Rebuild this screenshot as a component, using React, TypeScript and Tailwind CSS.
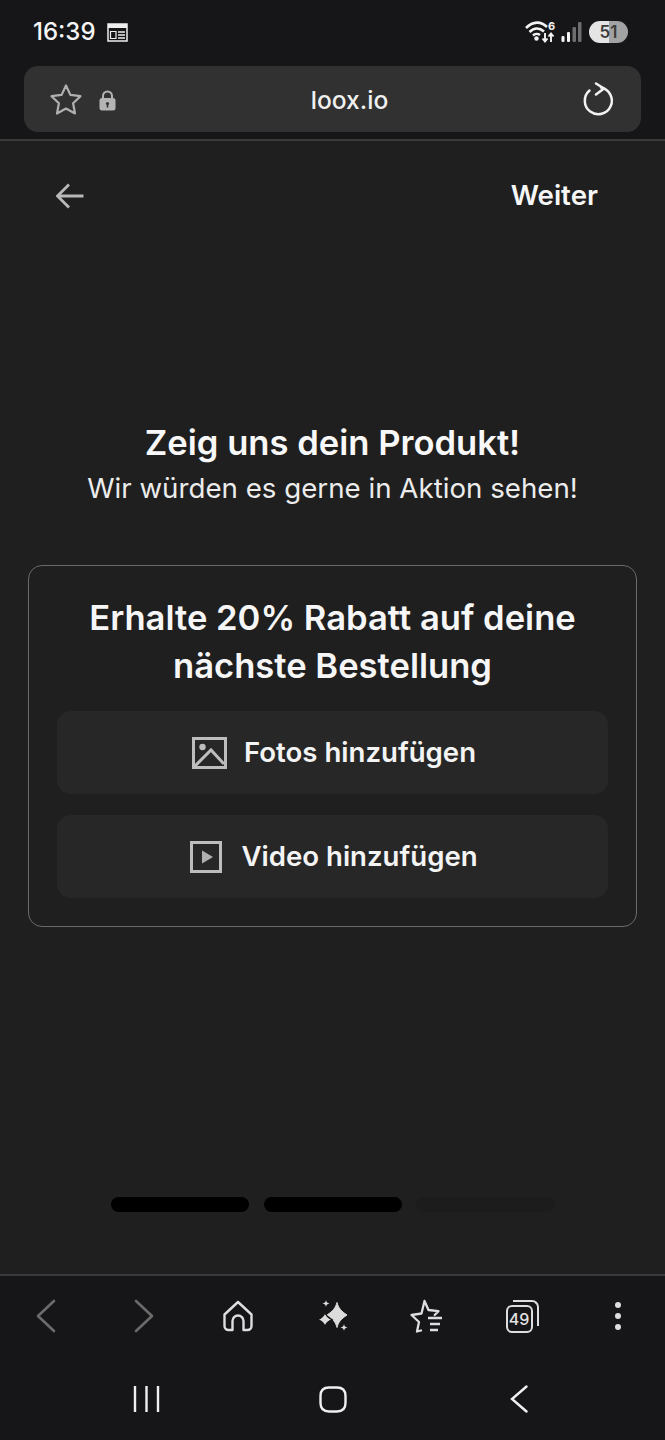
import React from "react";

const font = { fontFamily: "Inter, 'Liberation Sans', sans-serif" };

function StatusBar() {
  return (
    <div className="flex h-[66px] items-center justify-between pl-[33px] pr-[37px] pb-[2px]">
      <div className="flex items-center gap-[11px]">
        <span className="text-[24px] font-medium leading-none text-[#f5f5f5]">16:39</span>
        <svg width="21" height="19" viewBox="0 0 21 19" fill="none">
          <path d="M1 1h19v17H1z" stroke="#eee" strokeWidth="1.500" />
          <path d="M1 1h19v4H1z" fill="#eee" />
          <path d="M3.500 8.500h5.500v7H3.500z" stroke="#eee" strokeWidth="1.200" />
          <path d="M11 9h7M11 12h7M11 15h7" stroke="#eee" strokeWidth="1.300" />
        </svg>
      </div>
      <div className="flex items-center gap-[5px]">
        <svg width="31" height="24" viewBox="0 0 31 24" fill="none">
          <path d="M1 8C8 1 16 1 22 7" stroke="#f2f2f2" strokeWidth="2.600" />
          <path d="M4.500 12C9 7.500 14.500 7.500 19 11.500" stroke="#f2f2f2" strokeWidth="2.600" />
          <path d="M8 15.500C10 13.500 13 13.500 15 15" stroke="#f2f2f2" strokeWidth="2.600" />
          <circle cx="11.500" cy="18.500" r="2.200" fill="#f2f2f2" />
          <path d="M20 13v8M17.500 18.500l2.500 3 2.500-3" stroke="#f2f2f2" strokeWidth="1.900" />
          <path d="M26 22v-8M23.500 16.500l2.500-3 2.500 3" stroke="#f2f2f2" strokeWidth="1.900" />
          <text x="23" y="10" fontSize="11" fontWeight="700" fill="#f2f2f2" style={font}>6</text>
        </svg>
        <svg width="21" height="22" viewBox="0 0 21 22" fill="none">
          <rect x="0.500" y="15" width="3" height="6" rx="1" fill="#f2f2f2" />
          <rect x="6" y="11" width="3" height="10" rx="1" fill="#f2f2f2" />
          <rect x="11.500" y="6" width="3.500" height="15" rx="1" fill="#6e6e6e" />
          <rect x="17" y="1" width="3.500" height="20" rx="1" fill="#6e6e6e" />
        </svg>
        <div className="relative ml-[2px] flex h-[22px] w-[39px] items-center justify-center overflow-hidden rounded-full bg-[linear-gradient(90deg,#e4e4e4_51%,#a3a3a3_51%)]">
          <span className="text-[17px] font-semibold leading-none text-[#3c3c3c]">51</span>
        </div>
      </div>
    </div>
  );
}

function UrlBar() {
  return (
    <div className="mx-[24px] flex h-[66px] items-center justify-between rounded-[14px] bg-[#313131] pl-[25px] pr-[26px] pt-[2px]">
      <div className="flex items-center gap-[16px]">
        <svg width="34" height="34" viewBox="0 0 34 34" fill="none">
          <path d="M17 2.500l4.400 9.400 10.100 1.300-7.400 7.100 1.900 10.200-9-5-9 5 1.900-10.200-7.400-7.100 10.100-1.300z" stroke="#b0b0b0" strokeWidth="2.200" strokeLinejoin="round" />
        </svg>
        <svg width="17" height="21" viewBox="0 0 17 21" fill="none">
          <path d="M4 9V6a4.500 4.500 0 0 1 9 0v3" stroke="#b4b4b4" strokeWidth="2" />
          <rect x="0.500" y="8" width="16" height="12.500" rx="2.500" fill="#b4b4b4" />
          <circle cx="8.500" cy="13.500" r="1.600" fill="#333" />
          <rect x="7.700" y="14" width="1.600" height="3.500" fill="#333" />
        </svg>
      </div>
      <span className="text-[24.600px] font-medium leading-none text-[#f0f0f0]">loox.io</span>
      <svg width="32" height="36" viewBox="0 0 32 36" fill="none">
        <path d="M18 5.500A13.500 13.500 0 1 1 6.500 8.500" stroke="#f2f2f2" strokeWidth="2.500" strokeLinecap="round" />
        <path d="M13 1.500L21 6.500 13 12.500" stroke="#f2f2f2" strokeWidth="2.500" strokeLinecap="round" strokeLinejoin="round" />
      </svg>
    </div>
  );
}

function PageHeader() {
  return (
    <div className="mt-[41px] flex h-[28px] items-center justify-between pl-[56px] pr-[67px]">
      <svg width="28" height="28" viewBox="0 0 28 28" fill="none">
        <path d="M1.500 14h26M13 2.500L1.500 14 13 25.500" stroke="#b8b8b8" strokeWidth="2.800" />
      </svg>
      <span className="text-[27.700px] font-semibold leading-none text-[#f6f6f6]">Weiter</span>
    </div>
  );
}

function ActionButton({ icon, label, pad }: { icon: React.ReactNode; label: string; pad: string }) {
  return (
    <div className={`flex h-[83px] items-center justify-center gap-[17px] rounded-[14px] bg-[#272727] ${pad}`}>
      {icon}
      <span className="text-[27.600px] font-semibold leading-none text-[#f4f4f4]">{label}</span>
    </div>
  );
}

function Card() {
  return (
    <div className="mx-[28px] mt-[60px] rounded-[14px] border border-[#6a6a6a] px-[28px] pb-[28px] pt-[27px]">
      <h2 className="text-center text-[34.600px] font-semibold leading-[48px] text-[#f6f6f6]">
        Erhalte 20% Rabatt auf deine
        <br />
        nächste Bestellung
      </h2>
      <div className="mt-[22px] flex flex-col gap-[21px]">
        <ActionButton
          pad="pl-[3px]"
          label="Fotos hinzufügen"
          icon={
            <svg width="35" height="32" viewBox="0 0 35 32" fill="none">
              <rect x="1.500" y="1.500" width="32" height="29" stroke="#bdbdbd" strokeWidth="3" />
              <circle cx="10.500" cy="10" r="3.200" fill="#bdbdbd" />
              <path d="M3 29L19 13 32 27" stroke="#bdbdbd" strokeWidth="3" />
            </svg>
          }
        />
        <ActionButton
          pad="pl-[3px] gap-[19px]"
          label="Video hinzufügen"
          icon={
            <svg width="32" height="32" viewBox="0 0 32 32" fill="none">
              <rect x="1.500" y="1.500" width="29" height="29" stroke="#bdbdbd" strokeWidth="3" />
              <path d="M12 9.500L23 16l-11 6.500z" fill="#b0b0b0" />
            </svg>
          }
        />
      </div>
    </div>
  );
}

function Progress() {
  return (
    <div className="mt-[270px] flex justify-center gap-[14.500px]">
      <div className="h-[15px] w-[138px] rounded-full bg-black" />
      <div className="h-[15px] w-[138px] rounded-full bg-black" />
      <div className="h-[15px] w-[138px] rounded-full bg-[#1c1c1c]" />
    </div>
  );
}

function BrowserNav() {
  return (
    <div className="grid h-[84px] grid-cols-7 items-center justify-items-center pb-[4px]">
      <svg className="ml-[-4px]" width="20" height="34" viewBox="0 0 20 34" fill="none">
        <path d="M18 2L2 17l16 15" stroke="#6b6b6b" strokeWidth="2.600" strokeLinecap="round" strokeLinejoin="round" />
      </svg>
      <svg className="ml-[3px]" width="20" height="34" viewBox="0 0 20 34" fill="none">
        <path d="M2 2l16 15L2 32" stroke="#6b6b6b" strokeWidth="2.600" strokeLinecap="round" strokeLinejoin="round" />
      </svg>
      <svg width="32" height="32" viewBox="0 0 32 32" fill="none">
        <path d="M2.500 14.500L16 2l13.500 12.500V26a4 4 0 0 1-4 4h-4V21a5.500 5.500 0 0 0-11 0v9h-4a4 4 0 0 1-4-4z" stroke="#dedede" strokeWidth="2.400" strokeLinejoin="round" />
      </svg>
      <svg width="32" height="34" viewBox="0 0 32 34" fill="none">
        <path d="M20 3.500c1.500 5.500 4 8.500 10 12.500-6 4-8.500 7-10 12.500-1.500-5.500-4-8.500-10-12.500 6-4 8.500-7 10-12.500z" fill="#dcdcdc" stroke="#dcdcdc" strokeWidth="1" strokeLinejoin="round" />
        <path d="M8 13.500c1 3 2.500 5 7 7-4.500 2-6 4-7 7-1-3-2.500-5-7-7 4.500-2 6-4 7-7z" fill="#dcdcdc" stroke="#161618" strokeWidth="1.200" />
        <path d="M9 1c.4 2.200 1.200 3 3.500 3.500C10.200 5 9.400 5.800 9 8c-.4-2.200-1.200-3-3.500-3.500C7.800 4 8.600 3.200 9 1zM27 25c.4 2.200 1.200 3 3.500 3.500-2.300.5-3.100 1.300-3.500 3.500-.4-2.200-1.200-3-3.500-3.500 2.300-.5 3.100-1.300 3.500-3.500z" fill="#dcdcdc" />
      </svg>
      <svg className="ml-[-4px]" width="34" height="34" viewBox="0 0 34 34" fill="none">
        <path d="M15.500 2l4 9 10 1.200-3.800 3.800M12 31.500l-4 1 2-9.500-7.500-7 10-1.500L15.500 2" stroke="#dedede" strokeWidth="2.300" strokeLinecap="round" strokeLinejoin="round" />
        <path d="M19 19h14M21 25h10M21 31h8" stroke="#dedede" strokeWidth="2.600" />
      </svg>
      <div className="relative ml-[-1px] h-[33px] w-[33px]">
        <div className="absolute right-0 top-0 h-[26px] w-[26px] rounded-tr-[7px] border-r-2 border-t-2 border-[#dedede]" />
        <div className="absolute bottom-0 left-0 flex h-[28px] w-[27px] items-center justify-center rounded-[6px] border-2 border-[#dedede] bg-[#161618]">
          <span className="text-[16px] font-medium leading-none text-[#e2e2e2]">49</span>
        </div>
      </div>
      <div className="flex flex-col gap-[5px]">
        <div className="h-[6px] w-[6px] rounded-full bg-[#dedede]" />
        <div className="h-[6px] w-[6px] rounded-full bg-[#dedede]" />
        <div className="h-[6px] w-[6px] rounded-full bg-[#dedede]" />
      </div>
    </div>
  );
}

function SystemNav() {
  return (
    <div className="grid grid-cols-[186px_186px_186px] items-center justify-center justify-items-center pt-[25px]">
      <svg width="27" height="26" viewBox="0 0 27 26" fill="none">
        <path d="M2 0v26M13.500 0v26M25 0v26" stroke="#efefef" strokeWidth="2.400" />
      </svg>
      <svg width="28" height="27" viewBox="0 0 28 27" fill="none">
        <path d="M10 1.500h8c6 0 8.500 2.500 8.500 8.500v7c0 6-2.500 8.500-8.500 8.500h-8c-6 0-8.500-2.500-8.500-8.500v-7c0-6 2.500-8.500 8.500-8.500z" stroke="#efefef" strokeWidth="2.400" />
      </svg>
      <svg width="18" height="28" viewBox="0 0 18 28" fill="none">
        <path d="M16.500 1.500L2 14l14.500 12.500" stroke="#efefef" strokeWidth="2.400" strokeLinecap="round" />
      </svg>
    </div>
  );
}

export default function App() {
  return (
    <div className="flex h-[1440px] w-[665px] flex-col overflow-hidden bg-[#1f1f1f]" style={font}>
      <div className="h-[141px] shrink-0 border-b-2 border-[#3a3a3a] bg-[#161618]">
        <StatusBar />
        <UrlBar />
      </div>
      <PageHeader />
      <div className="mt-[210px] flex flex-col items-center">
        <h1 className="text-[34.600px] font-semibold leading-[44px] text-[#f8f8f8]">Zeig uns dein Produkt!</h1>
        <p className="mt-[7px] text-[27.700px] font-normal leading-[34px] text-[#ececec]">Wir würden es gerne in Aktion sehen!</p>
      </div>
      <Card />
      <Progress />
      <div className="mt-auto h-[166px] shrink-0 border-t-2 border-[#3a3a3a] bg-[#161618]">
        <BrowserNav />
        <SystemNav />
      </div>
    </div>
  );
}
